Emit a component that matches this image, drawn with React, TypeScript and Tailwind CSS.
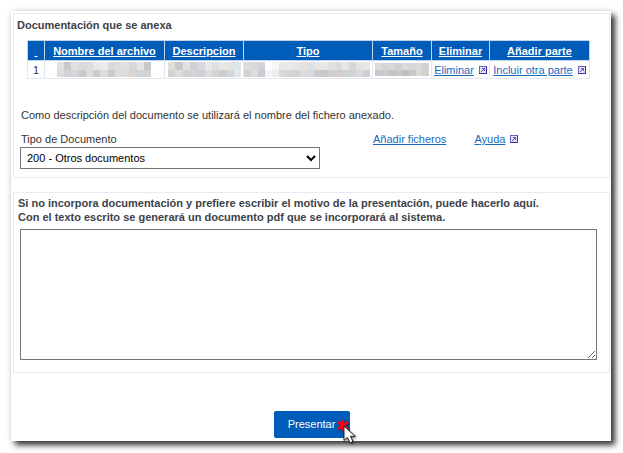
import React from 'react'

interface MosaicProps {
    tones: string[];
    className: string;
}

const columns = [
    { id: "num", title: "\u00a0", width: "w-[17px]" },
    { id: "nombre", title: "Nombre del archivo", width: "w-[120px]" },
    { id: "descripcion", title: "Descripcion", width: "w-[79px]" },
    { id: "tipo", title: "Tipo", width: "w-auto" },
    { id: "tamano", title: "Tamaño", width: "w-[59px]" },
    { id: "eliminar", title: "Eliminar", width: "w-[58px]" },
    { id: "parte", title: "Añadir parte", width: "w-[100px]" },
];

// two rows of tiles each, dark to light greys
const nombreTones = [
    "#e0e0e2", "#c8c8ca", "#e0e2e0", "#dcdade", "#dedcd8", "#e6e8f0", "#ecebee", "#d6d8da", "#dededc", "#e4e2de", "#d8d8da", "#e4e6e4", "#c6c8c8",
    "#dcdcda", "#d4d2d4", "#d6d4da", "#c9c8cf", "#dcdcd8", "#cccccc", "#dedcd8", "#cccacc", "#dededc", "#dcdcd8", "#dcd2d0", "#cdd6dc", "#d4d4d2",
];

const descripcionTones = [
    "#dededa", "#c9c8ca", "#e2e2e4", "#d2d0d2", "#dad9dd", "#e8e8ea", "#e0e0de", "#e9e9ea", "#e6e4e0", "#dde5ec",
    "#d2d2ce", "#dcdcda", "#d0cfd2", "#d2d4dc", "#d0cfd2", "#dedede", "#d4d4d6", "#cccccd", "#d6d4d4", "#dfe6ec",
];

const tipoTones = [
    "#dcdcdc", "#d9d8dc", "#d4d1d7", "#ffffff", "#f6f7f8", "#e9e8e7", "#e9e8ea", "#e6e4e6", "#e6e2de", "#dbe2e8", "#e6e6e6", "#e9e8e8", "#e2e2e2", "#dcdcde", "#e8e8e9", "#d6d6d6", "#e4e4e4", "#e6e6e8",
    "#d2d2d2", "#dedede", "#ccccd2", "#f4f4f6", "#f0eff0", "#dcdad8", "#d6d4d6", "#d2d2d4", "#dcdada", "#d4dade", "#cccbce", "#c8c8c9", "#d0cfd0", "#d8ccca", "#ccd4d6", "#d2d2d4", "#dad9dc", "#cfced0",
];

const tamanoTones = [
    "#dcdcdc", "#d4d4d5", "#d8d8d8", "#d0d0d0", "#dbdadc", "#d6d8d6", "#dadad8", "#d2d2d4",
    "#c8c8c8", "#cbcaca", "#c4c4c4", "#c8c8ca", "#bebec0", "#c9c8c8", "#dcd8d0", "#cfcfcf",
];

const App = () => {
    return (
        <div className="pt-[11px] pl-[11px] pr-3 pb-3 bg-white font-['Liberation_Sans',Arial,sans-serif] text-[11px] text-[#333]">
            <main className="bg-white pt-0.5 pl-0.5 pr-px pb-[3px] shadow-[4px_4px_6px_#333,0_0_5px_#ddd]">
                <section className="border border-[#e4ecf5] pt-1 pb-2">
                    <h2 className="ml-[3px] font-bold leading-[14px] text-[#3c4249]">Documentación que se anexa</h2>

                    <div className="ml-[13px] mr-[19px] mt-2">
                        <table className="w-full table-fixed border-collapse">
                            <thead>
                                <tr className="h-5 bg-[#005cb9]">
                                    {columns.map((column) => (
                                    <th key={column.id} className={`${column.width} border border-[#c3d5e8] p-0 text-center font-bold leading-4 text-white whitespace-nowrap`}>
                                        <a href="#" className="underline">{column.title}</a>
                                    </th>
                                    ))}
                                </tr>
                            </thead>
                            <tbody>
                                <tr className="h-[18px]">
                                    <td className="border border-[#e1e9f2] p-0 text-center leading-4">1</td>
                                    <td className="border border-[#e1e9f2] p-0">
                                        <Mosaic tones={nombreTones} className="ml-3 h-[15px] w-[94px]" />
                                    </td>
                                    <td className="border border-[#e1e9f2] p-0">
                                        <Mosaic tones={descripcionTones} className="mx-auto h-[15px] w-[73px]" />
                                    </td>
                                    <td className="border border-[#e1e9f2] p-0">
                                        <Mosaic tones={tipoTones} className="h-[15px] w-full pr-0.5" />
                                    </td>
                                    <td className="border border-[#e1e9f2] p-0">
                                        <Mosaic tones={tamanoTones} className="mx-auto h-[13px] w-[54px]" />
                                    </td>
                                    <td className="border border-[#e1e9f2] p-0 leading-4 whitespace-nowrap">
                                        <div className="flex items-center justify-center gap-[5px]">
                                            <a href="#" className="text-[#1a6bc0] underline">Eliminar</a>
                                            <WindowIcon />
                                        </div>
                                    </td>
                                    <td className="border border-[#e1e9f2] p-0 leading-4 whitespace-nowrap">
                                        <div className="flex items-center justify-center gap-[5px]">
                                            <a href="#" className="text-[#1a6bc0] underline">Incluir otra parte</a>
                                            <WindowIcon />
                                        </div>
                                    </td>
                                </tr>
                            </tbody>
                        </table>
                    </div>

                    <p className="ml-[7px] mt-7 leading-4">Como descripción del documento se utilizará el nombre del fichero anexado.</p>

                    <div className="ml-1.5 mt-2 flex items-start">
                        <div className="w-[300px]">
                            <label htmlFor="tipo" className="ml-px block leading-4">Tipo de Documento</label>
                            <select id="tipo" className="h-[22px] w-full border border-[#767676] bg-white pl-0.5 text-[11px] text-black">
                                <option>200 - Otros documentos</option>
                            </select>
                        </div>
                        <a href="#" className="ml-[53px] leading-4 text-[#1a6bc0] underline">Añadir ficheros</a>
                        <div className="ml-7 flex items-center gap-[5px] leading-4">
                            <a href="#" className="text-[#1a6bc0] underline">Ayuda</a>
                            <WindowIcon />
                        </div>
                    </div>
                </section>

                <section className="mt-3.5 border border-[#e4ecf5] pt-[3px] pb-3">
                    <label htmlFor="motivo" className="ml-1 block font-bold leading-[14px] text-[#3c4249]">
                        Si no incorpora documentación y prefiere escribir el motivo de la presentación, puede hacerlo aquí.
                        <br />
                        Con el texto escrito se generará un documento pdf que se incorporará al sistema.
                    </label>
                    <div className="ml-1.5 mr-3 mt-[5px]">
                        <textarea id="motivo" className="block h-[131px] w-full border border-[#767676] bg-white p-0.5" />
                    </div>
                </section>

                <div className="mt-[38px] flex justify-center">
                    <button type="button" className="relative h-[27px] w-[76px] rounded-xs bg-[#005cb9] text-[11px] text-white">
                        Presentar
                        <Pointer />
                    </button>
                </div>
            </main>
        </div>
    )
}


const Mosaic = ({ tones, className }: MosaicProps) => {
    const perRow = tones.length / 2;
    return (
        <svg className={`block ${className}`} viewBox={`0 0 ${perRow} 2`} preserveAspectRatio="none" shapeRendering="crispEdges" aria-hidden="true">
            {tones.map((tone, i) => (
                <rect key={i} x={i % perRow} y={Math.floor(i / perRow)} width="1" height="1" fill={tone} />
            ))}
        </svg>
    );
};

const WindowIcon = () => {
    return (
        <svg width="8" height="8" viewBox="0 0 8 8" fill="none" aria-hidden="true">
            <rect x="0.5" y="0.5" width="7" height="7" fill="#e6e4fa" stroke="#6a62c4" />
            <path d="M0 7.5h8M7.5 0v8" stroke="#3a32a4" />
            <path d="M3 2.5h2.5V5M5.5 2.5L2 6" stroke="#5c54bc" />
        </svg>
    );
};

// red click mark with the mouse arrow over the corner of the button
const Pointer = () => {
    return (
        <svg className="absolute left-[61px] top-[6px] drop-shadow-[1px_1px_1px_rgba(0,0,0,0.5)]" width="24" height="30" viewBox="0 0 24 30" aria-hidden="true">
            <path d="M8 3v11M3 5.2l10 6.6M13 5.2l-10 6.6" stroke="#ff0010" strokeWidth="2.6" />
            <path d="M9 9v14.4l3.4-3 2.6 5.4 3-1.3-2.5-5.2h4.7z" fill="#fff" stroke="#222" strokeWidth="1" />
        </svg>
    );
};

export default App
